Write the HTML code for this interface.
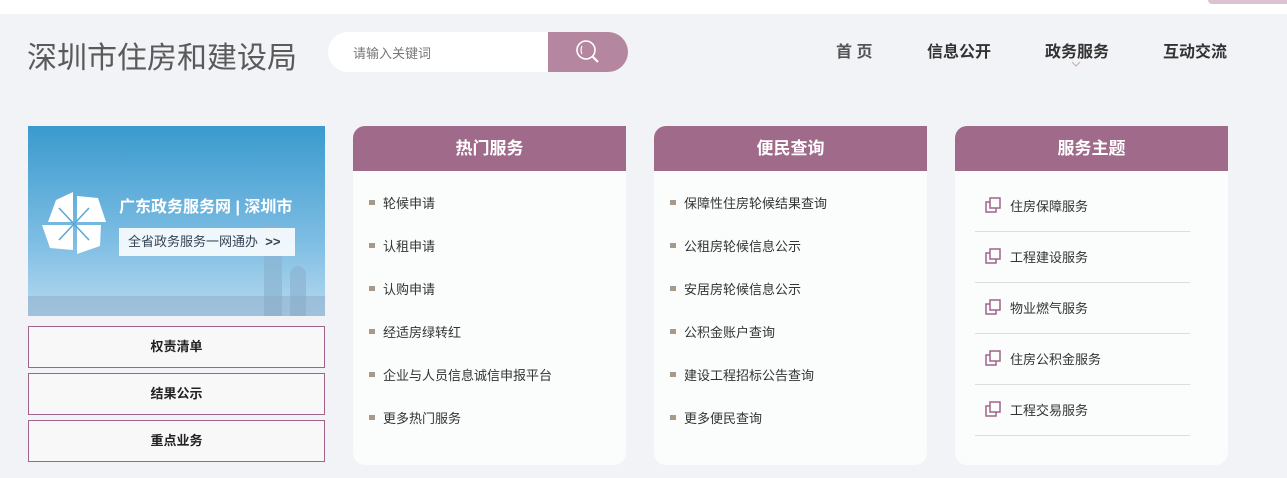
<!DOCTYPE html>
<html><head><meta charset="utf-8"><style>
*{margin:0;padding:0;box-sizing:border-box}
body{width:1287px;height:478px;background:#f2f3f7;font-family:"Liberation Sans","Noto Sans CJK SC",sans-serif;position:relative;overflow:hidden;color:#333}
.top{position:absolute;left:0;top:0;width:1287px;height:14px;background:#fff}
.top i{position:absolute;left:1208px;top:0;width:79px;height:4px;background:#dcc3d1;border-radius:0 0 0 4px}
.title{position:absolute;left:27px;top:33px;font-size:30px;color:#5a5a5a}
.search{position:absolute;left:328px;top:32px;width:300px;height:40px;background:#fff;border-radius:20px;overflow:hidden}
.search span{position:absolute;left:25px;top:11px;font-size:13px;color:#777}
.search b{position:absolute;left:220px;top:0;width:80px;height:40px;background:#b4869f}
.nav{position:absolute;top:38px;font-size:16px;font-weight:bold;color:#333}
.banner{position:absolute;left:28px;top:126px;width:297px;height:190px;background:linear-gradient(#3a9ace,#7dbde3 60%,#b6d9ee);overflow:hidden}
.btn{position:absolute;left:28px;width:297px;height:42px;border:1px solid #a0648a;background:#f8f8f8;text-align:center;line-height:40px;font-size:13px;font-weight:bold;color:#222}
.panel{position:absolute;top:126px;width:273px;height:339px;background:#fbfcfc;border-radius:12px 0 12px 12px;overflow:hidden}
.panel h3{height:45px;background:#a06b8a;color:#fff;text-align:center;line-height:45px;font-size:17px}
.panel li{list-style:none;position:absolute;left:30px;font-size:13px;color:#333}
.panel li:before{content:"";position:absolute;left:-14px;top:7px;width:6px;height:5px;background:#a89a88}
.th{position:absolute;left:20px;width:215px;height:51px;border-bottom:1px solid #ddd;font-size:13px;color:#333}
.th span{position:absolute;left:35px;top:15px}
.th svg{position:absolute;left:10px;top:16px}
</style></head><body>
<div class="top"><i></i></div>
<div class="title">深圳市住房和建设局</div>
<div class="search"><span>请输入关键词</span><b><svg width="80" height="40"><circle cx="38" cy="18" r="9" fill="none" stroke="#fff" stroke-width="1.6"/><line x1="44" y1="24" x2="50" y2="30" stroke="#fff" stroke-width="2.2"/><path d="M34 14 q-2 4 0 8" fill="none" stroke="#fff" stroke-width="1.2"/></svg></b></div>
<div class="nav" style="left:836px;color:#555">首 页</div>
<div class="nav" style="left:927px">信息公开</div>
<div class="nav" style="left:1045px">政务服务</div>
<div class="nav" style="left:1163px">互动交流</div>
<svg style="position:absolute;left:1071px;top:61px" width="10" height="6"><path d="M1 1l4 4 4-4" fill="none" stroke="#c8a8bb" stroke-width="1"/></svg>
<div class="banner">
<svg style="position:absolute;left:14px;top:62px" width="66" height="68"><polygon points="14,12 31,4 31,34 6,34" fill="#fff"/><polygon points="35,8 56,10 64,34 35,34" fill="#fff"/><polygon points="0,37 31,37 31,62 8,60" fill="#fff"/><polygon points="35,37 59,37 58,58 35,66" fill="#fff"/><g stroke="#5aa8d6" stroke-width="1.5"><line x1="17" y1="20" x2="47" y2="52"/><line x1="47" y1="20" x2="17" y2="52"/></g></svg>
<div style="position:absolute;left:236px;top:100px;width:18px;height:90px;background:rgba(140,180,210,.7)"></div>
<div style="position:absolute;left:262px;top:140px;width:16px;height:50px;background:rgba(140,180,210,.7);border-radius:8px 8px 0 0"></div>
<div style="position:absolute;left:0;top:170px;width:297px;height:20px;background:rgba(140,170,200,.5)"></div>
<div style="position:absolute;left:91px;top:67px;color:#fff;font-size:16px;font-weight:bold;white-space:nowrap">广东政务服务网 | 深圳市</div>
<div style="position:absolute;left:91px;top:102px;width:176px;height:28px;background:rgba(255,255,255,.88);font-size:13px;color:#345;line-height:28px;padding-left:9px;white-space:nowrap">全省政务服务一网通办 &nbsp;<b>&gt;&gt;</b></div>
</div>
<div class="btn" style="top:326px">权责清单</div>
<div class="btn" style="top:373px">结果公示</div>
<div class="btn" style="top:420px">重点业务</div>
<div class="panel" style="left:353px"><h3>热门服务</h3><ul>
<li style="top:67px">轮候申请</li><li style="top:110px">认租申请</li><li style="top:153px">认购申请</li><li style="top:196px">经适房绿转红</li><li style="top:239px">企业与人员信息诚信申报平台</li><li style="top:282px">更多热门服务</li></ul></div>
<div class="panel" style="left:654px"><h3>便民查询</h3><ul>
<li style="top:67px">保障性住房轮候结果查询</li><li style="top:110px">公租房轮候信息公示</li><li style="top:153px">安居房轮候信息公示</li><li style="top:196px">公积金账户查询</li><li style="top:239px">建设工程招标公告查询</li><li style="top:282px">更多便民查询</li></ul></div>
<div class="panel" style="left:955px"><h3>服务主题</h3>
<div class="th" style="top:55px"><svg width="16" height="16"><rect x="5" y="1" width="10" height="10" fill="none" stroke="#a0648a" stroke-width="1.5"/><path d="M5 5H1v10h10v-4" fill="none" stroke="#a0648a" stroke-width="1.5"/></svg><span>住房保障服务</span></div>
<div class="th" style="top:106px"><svg width="16" height="16"><rect x="5" y="1" width="10" height="10" fill="none" stroke="#a0648a" stroke-width="1.5"/><path d="M5 5H1v10h10v-4" fill="none" stroke="#a0648a" stroke-width="1.5"/></svg><span>工程建设服务</span></div>
<div class="th" style="top:157px"><svg width="16" height="16"><rect x="5" y="1" width="10" height="10" fill="none" stroke="#a0648a" stroke-width="1.5"/><path d="M5 5H1v10h10v-4" fill="none" stroke="#a0648a" stroke-width="1.5"/></svg><span>物业燃气服务</span></div>
<div class="th" style="top:208px"><svg width="16" height="16"><rect x="5" y="1" width="10" height="10" fill="none" stroke="#a0648a" stroke-width="1.5"/><path d="M5 5H1v10h10v-4" fill="none" stroke="#a0648a" stroke-width="1.5"/></svg><span>住房公积金服务</span></div>
<div class="th" style="top:259px"><svg width="16" height="16"><rect x="5" y="1" width="10" height="10" fill="none" stroke="#a0648a" stroke-width="1.5"/><path d="M5 5H1v10h10v-4" fill="none" stroke="#a0648a" stroke-width="1.5"/></svg><span>工程交易服务</span></div>
</div>
</body></html>
